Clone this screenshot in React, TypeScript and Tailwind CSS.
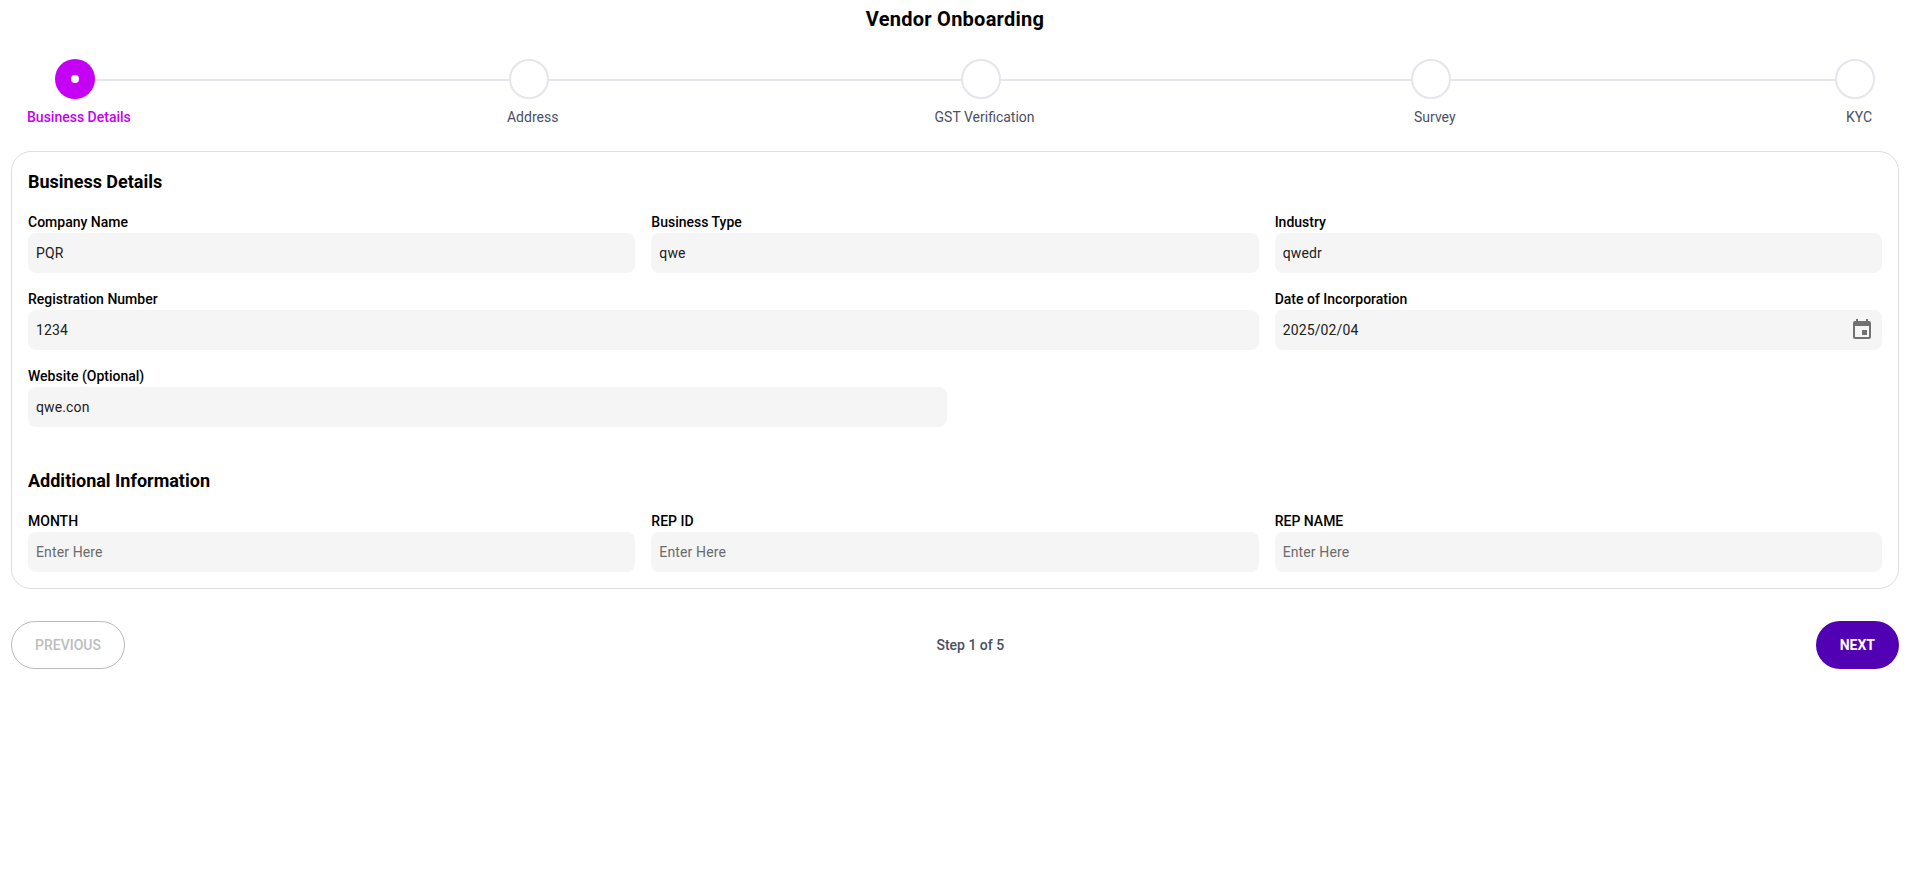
import { useState } from "react";

const steps = ["Business Details", "Address", "GST Verification", "Survey", "KYC"];

function Stepper({ active }: { active: number }) {
  return (
    <div className="relative mx-2 mr-4 mt-[26px] flex justify-between">
      <div className="absolute left-14 right-7 top-5 h-0.5 bg-[#e5e5ec]" />
      {steps.map((step, i) => (
        <div key={step} className="relative flex flex-col items-center">
          {i === active ? (
            <div className="mx-2 flex size-10 items-center justify-center rounded-full bg-[#c400f5]">
              <div className="size-2 rounded-full bg-white" />
            </div>
          ) : (
            <div className="mx-2 size-10 rounded-full border-2 border-[#e5e5ec] bg-white" />
          )}
          <span
            className={
              i === active
                ? "ml-2 mt-2 text-sm font-medium leading-5 text-[#c400f5]"
                : "ml-2 mt-2 text-sm leading-5 text-[#4b5063]"
            }
          >
            {step}
          </span>
        </div>
      ))}
    </div>
  );
}

type FieldProps = { label: string; initial?: string; span: string; calendar?: boolean };

function Field({ label, initial = "", span, calendar = false }: FieldProps) {
  const [value, setValue] = useState(initial);
  return (
    <label className={span}>
      <span className="block text-sm font-medium leading-[21px] text-black">{label}</span>
      <span className="flex h-10 items-center rounded-lg bg-[#f5f5f5] px-2">
        <input
          className="min-w-0 flex-1 bg-transparent text-sm tracking-[0.00938em] text-[#212121] outline-none placeholder:text-[#6b6b6b]"
          value={value}
          placeholder="Enter Here"
          onChange={(e) => setValue(e.target.value)}
        />
        {calendar && (
          <svg className="size-6 fill-[#717171]" viewBox="0 0 24 24">
            <path d="M17 12h-5v5h5v-5zM16 1v2H8V1H6v2H5c-1.11 0-1.99.9-1.99 2L3 19c0 1.1.89 2 2 2h14c1.1 0 2-.9 2-2V5c0-1.1-.9-2-2-2h-1V1h-2zm3 18H5V8h14v11z" />
          </svg>
        )}
      </span>
    </label>
  );
}

export default function App() {
  return (
    <div className="min-h-screen bg-white pl-[11px] pr-4 pt-[5px] font-['Roboto',sans-serif]">
      <h1 className="text-center text-xl font-bold leading-7 tracking-[0.25px] text-black">Vendor Onboarding</h1>
      <Stepper active={0} />
      <main className="mt-6 rounded-[20px] border border-[#dedede] p-4">
        <h2 className="text-lg font-bold leading-7 text-black">Business Details</h2>
        <div className="mt-4 grid grid-cols-6 gap-4">
          <Field label="Company Name" initial="PQR" span="col-span-2" />
          <Field label="Business Type" initial="qwe" span="col-span-2" />
          <Field label="Industry" initial="qwedr" span="col-span-2" />
          <Field label="Registration Number" initial="1234" span="col-span-4" />
          <Field label="Date of Incorporation" initial="2025/02/04" span="col-span-2" calendar />
          <Field label="Website (Optional)" initial="qwe.con" span="col-span-3" />
        </div>
        <h2 className="mt-10 text-lg font-bold leading-7 text-black">Additional Information</h2>
        <div className="mt-4 grid grid-cols-3 gap-4">
          <Field label="MONTH" span="col-span-1" />
          <Field label="REP ID" span="col-span-1" />
          <Field label="REP NAME" span="col-span-1" />
        </div>
      </main>
      <footer className="mt-8 flex items-center justify-between">
        <button
          disabled
          className="h-12 rounded-3xl border border-[#b9b9b9] px-[23px] text-sm font-medium text-[#bdbdbd]"
        >
          PREVIOUS
        </button>
        <span className="text-sm font-medium text-[#4b5063]">Step 1 of 5</span>
        <button className="h-12 rounded-3xl bg-[#5200b3] px-6 text-sm font-bold text-white">NEXT</button>
      </footer>
    </div>
  );
}
